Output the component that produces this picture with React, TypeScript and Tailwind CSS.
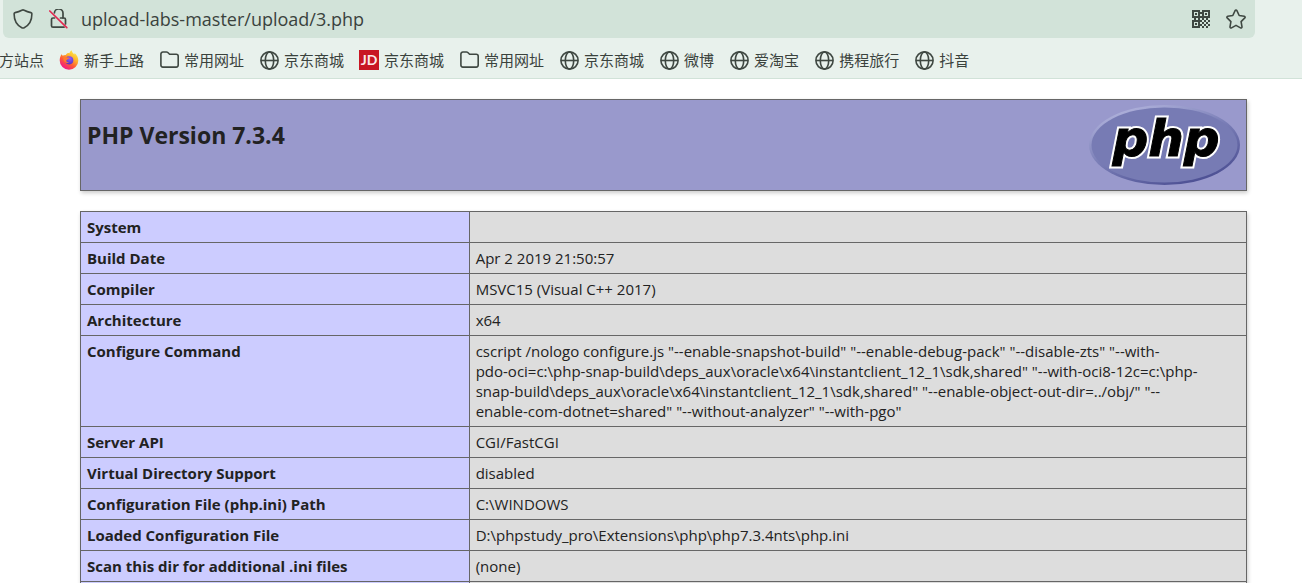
import type { ReactNode } from "react";

const INK = "#3f4842";

function Shield() {
  return (
    <svg viewBox="0 0 20 20" className="size-5" fill="none" stroke={INK} strokeWidth="1.6" strokeLinejoin="round">
      <path d="M10 .9c.5 0 .8.2 1.200.4 2 1.100 4.500 1.900 6.700 2.300.6.1 1 .6 1 1.200 0 6.200-2.700 11.500-7.700 13.900-.8.400-1.600.400-2.400 0C3.800 16.300 1.100 11 1.100 4.800c0-.6.400-1.100 1-1.200 2.200-.4 4.700-1.200 6.700-2.300.4-.2.700-.4 1.200-.4z" />
    </svg>
  );
}

function InsecureLock() {
  return (
    <svg viewBox="0 0 20 20" className="size-5" fill="none" stroke={INK} strokeWidth="1.7" strokeLinecap="round" strokeLinejoin="round">
      <path d="M5.400 4A4.300 4.300 0 0 1 14 4.500V9" />
      <path d="M11.500 9H15a1.500 1.500 0 0 1 1.500 1.500V15M15 18.200H4A1.500 1.500 0 0 1 2.500 16.700V10.500A1.500 1.500 0 0 1 4 9H5.500" />
      <path d="M.8 2L17.800 18.600" stroke="#e22850" strokeWidth="1.700" />
    </svg>
  );
}

function QrCode() {
  return (
    <svg viewBox="0 0 18 18" className="size-[18px]" fill={INK} fillRule="evenodd">
      <path d="M0 0h8v8H0zM2 2v4h4V2zM3 3h2v2H3zM10 0h8v8h-8zM12 2v4h4V2zM13 3h2v2h-2zM0 10h8v8H0zM2 12v4h4v-4zM3 13h2v2H3zM8 2h2v2H8zM2 8h2v2H2zM6 8h2v2H6zM8 6h2v2H8zM10 8h2v2h-2zM14 8h2v2h-2zM8 10h2v2H8zM12 10h2v2h-2zM16 10h2v2h-2zM10 12h2v2h-2zM14 12h2v2h-2zM8 14h2v2H8zM12 14h2v2h-2zM16 14h2v2h-2zM10 16h2v2h-2zM14 16h2v2h-2z" />
    </svg>
  );
}

function Star() {
  return (
    <svg viewBox="0 0 20 20" className="size-5" fill="none" stroke={INK} strokeWidth="1.6" strokeLinejoin="round">
      <path d="M9.100 1.600a1 1 0 0 1 1.800 0l2.300 4.900 5.100.7a1 1 0 0 1 .5 1.700l-3.700 3.700.9 5.300a1 1 0 0 1-1.500 1L10 16.400l-4.500 2.500a1 1 0 0 1-1.500-1l.9-5.300L1.200 8.900a1 1 0 0 1 .5-1.700l5.100-.7z" />
    </svg>
  );
}

function Firefox() {
  return (
    <svg viewBox="1 0 20 20" className="size-5 shrink-0 overflow-visible">
      <defs>
        <linearGradient id="ff-body" x1=".85" y1=".05" x2=".25" y2=".95">
          <stop offset="0" stopColor="#fff04a" />
          <stop offset=".35" stopColor="#ffb32c" />
          <stop offset=".65" stopColor="#ff5a36" />
          <stop offset="1" stopColor="#f0148a" />
        </linearGradient>
        <radialGradient id="ff-globe" cx=".6" cy=".3" r=".8">
          <stop offset="0" stopColor="#9059ff" />
          <stop offset="1" stopColor="#4a2fb5" />
        </radialGradient>
      </defs>
      <path d="M2.400 4.200c.6.400 1 .9 1.300 1.500.9-.6 2-.8 3.100-.7C8 3.200 9.300 2.800 10.300 3.300 10.800 2 11.600 1 12.700.3c.1 1.700 1.200 2.900 2.700 4.100.2-.500.2-1 .1-1.500 2.300 1.700 3.800 4.500 3.800 7.600a9.300 9.300 0 0 1-18.600 0c0-2.400.7-4.500 1.700-6.300z" fill="url(#ff-body)" />
      <circle cx="10.200" cy="10.300" r="4.100" fill="url(#ff-globe)" />
      <path d="M4.300 7.200c1.500-.8 3.100-.4 4 .3.900 0 2.300 0 2.200.5-.2.700-1.300.9-1.900 1.300-.3.800-1.300.8-1.300 1.500 0 1 1.300 1.700 2.800 1.300-1 1.400-4 1.300-5.100-1-.6-1.200-.9-2.600-.7-3.900z" fill="#ff7a2e" />
    </svg>
  );
}

function Folder() {
  return (
    <svg viewBox="0 0 20 20" className="size-5 shrink-0" fill="none" stroke={INK} strokeWidth="1.6" strokeLinejoin="round">
      <path d="M.9 4A2 2 0 0 1 2.900 2h3.600a2 2 0 0 1 1.300.5L9.600 4.300H16.200a2 2 0 0 1 2 2v8.800a2 2 0 0 1-2 2H2.900a2 2 0 0 1-2-2z" />
    </svg>
  );
}

function Globe() {
  return (
    <svg viewBox="0 0 20 20" className="size-5 shrink-0" fill="none" stroke={INK} strokeWidth="1.6">
      <circle cx="9.500" cy="10.500" r="8.600" />
      <ellipse cx="9.500" cy="10.500" rx="4.200" ry="8.600" />
      <path d="M1 10.500h17" />
    </svg>
  );
}

function JdMark() {
  return (
    <svg viewBox="1 0 20 20" className="size-5 shrink-0 overflow-visible">
      <rect width="20" height="20" fill="#c81623" />
      <text x="10" y="15" textAnchor="middle" fontFamily="Lato, sans-serif" fontWeight="700" fontSize="14" fill="#fbe9ea">
        JD
      </text>
    </svg>
  );
}

function PhpLogo() {
  return (
    <svg viewBox="0 0 152 80" className="h-20 w-[152px] shrink-0" role="img" aria-label="PHP logo">
      <defs>
        <linearGradient id="rim" x1=".2" y1="0" x2=".8" y2="1">
          <stop offset="0" stopColor="#b4b6de" />
          <stop offset=".45" stopColor="#7c80b8" />
          <stop offset="1" stopColor="#474a8f" />
        </linearGradient>
      </defs>
      <ellipse cx="75.500" cy="40" rx="75.500" ry="40" fill="url(#rim)" />
      <ellipse cx="75.500" cy="40" rx="73" ry="37.500" fill="#777bb4" />
      <g
        textAnchor="middle"
        fontFamily="DejaVu Sans, sans-serif"
        fontWeight="700"
        fontStyle="italic"
        fontSize="50"
        strokeLinejoin="miter"
      >
        <text x="77" y="51" fill="#fff" stroke="#fff" strokeWidth="5" aria-hidden="true">
          php
        </text>
        <text x="77" y="51" fill="#000" stroke="#000" strokeWidth="1">
          php
        </text>
      </g>
    </svg>
  );
}

const bookmarks: { icon: ReactNode; label: string }[] = [
  { icon: <Firefox />, label: "新手上路" },
  { icon: <Folder />, label: "常用网址" },
  { icon: <Globe />, label: "京东商城" },
  { icon: <JdMark />, label: "京东商城" },
  { icon: <Folder />, label: "常用网址" },
  { icon: <Globe />, label: "京东商城" },
  { icon: <Globe />, label: "微博" },
  { icon: <Globe />, label: "爱淘宝" },
  { icon: <Globe />, label: "携程旅行" },
  { icon: <Globe />, label: "抖音" },
];

const rows: [string, string][] = [
  ["System", ""],
  ["Build Date", "Apr 2 2019 21:50:57"],
  ["Compiler", "MSVC15 (Visual C++ 2017)"],
  ["Architecture", "x64"],
  [
    "Configure Command",
    'cscript /nologo configure.js "--enable-snapshot-build" "--enable-debug-pack" "--disable-zts" "--with-\npdo-oci=c:\\php-snap-build\\deps_aux\\oracle\\x64\\instantclient_12_1\\sdk,shared" "--with-oci8-12c=c:\\php-\nsnap-build\\deps_aux\\oracle\\x64\\instantclient_12_1\\sdk,shared" "--enable-object-out-dir=../obj/" "--\nenable-com-dotnet=shared" "--without-analyzer" "--with-pgo"',
  ],
  ["Server API", "CGI/FastCGI"],
  ["Virtual Directory Support", "disabled"],
  ["Configuration File (php.ini) Path", "C:\\WINDOWS"],
  ["Loaded Configuration File", "D:\\phpstudy_pro\\Extensions\\php\\php7.3.4nts\\php.ini"],
  ["Scan this dir for additional .ini files", "(none)"],
  ["", ""],
];

export default function App() {
  return (
    <div className="h-screen overflow-hidden bg-white font-['Open_Sans','Noto_Sans_CJK_SC',sans-serif] text-[#222222]">
      <header className="border-b border-[#d1e2d8] bg-[#e8f1ec] text-[#3a423d]">
        <div className="pr-[47px] pl-[3px]">
          <div className="flex h-[38px] items-center gap-4 rounded-b-md bg-[#d2e3d9] pr-[9px] pl-[10px]">
            <button type="button" aria-label="Tracking protection">
              <Shield />
            </button>
            <button type="button" aria-label="Connection is not secure">
              <InsecureLock />
            </button>
            <input
              type="text"
              aria-label="Address"
              defaultValue="upload-labs-master/upload/3.php"
              className="-ml-1 min-w-0 flex-1 bg-transparent text-lg outline-none"
            />
            <button type="button" aria-label="QR code">
              <QrCode />
            </button>
            <button type="button" aria-label="Bookmark this page">
              <Star />
            </button>
          </div>
        </div>
        <nav className="flex h-10 items-center gap-4 overflow-hidden pt-1 text-[15px] leading-6 whitespace-nowrap">
          <a href="#" className="flex w-11 justify-end overflow-hidden">
            方站点
          </a>
          {bookmarks.map((b, i) => (
            <a key={i} href="#" className="flex items-center gap-1">
              {b.icon}
              {b.label}
            </a>
          ))}
        </nav>
      </header>

      <main className="flex flex-col gap-5 pt-5 pr-[55px] pl-20">
        <div className="flex items-start justify-between border border-[#666666] bg-[#9999cc] p-[5px] pl-[6px] shadow-[1px_2px_4px_#cccccc]">
          <h1 className="pt-[14px] text-[23px] leading-8 font-bold">PHP Version 7.3.4</h1>
          <PhpLogo />
        </div>
        <table className="w-full table-fixed border-collapse text-[15px] leading-5 shadow-[1px_2px_4px_#cccccc]">
          <tbody>
            {rows.map(([name, value]) => (
              <tr key={name}>
                <th scope="row" className="w-1/3 border border-[#666666] bg-[#ccccff] px-[6px] py-[5px] text-left align-top font-bold">
                  {name}
                </th>
                <td className="h-[31px] border border-[#666666] bg-[#dddddd] px-[6px] py-[5px] align-top whitespace-pre-line">
                  {value}
                </td>
              </tr>
            ))}
          </tbody>
        </table>
      </main>
    </div>
  );
}
